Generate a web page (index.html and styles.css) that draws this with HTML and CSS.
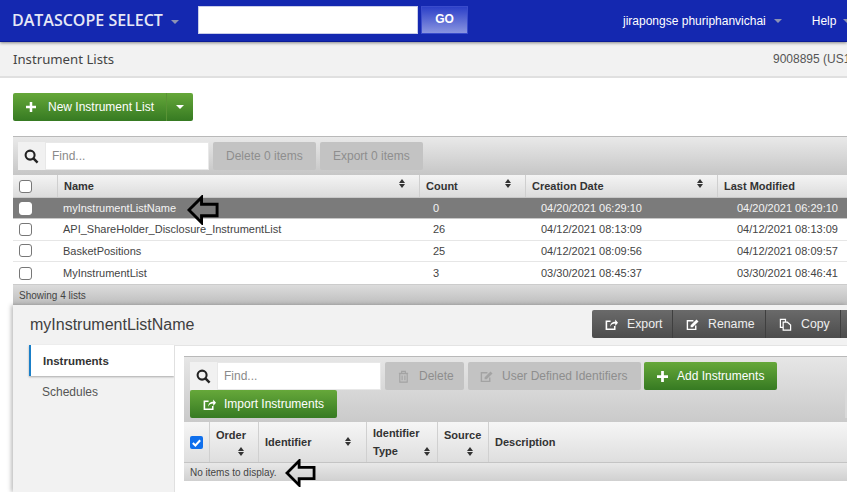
FILE: index.html
```html
<!DOCTYPE html>
<html lang="en">
<head>
<meta charset="utf-8">
<title>Instrument Lists</title>
<link rel="stylesheet" href="styles.css">
</head>
<body>
<div class="page">
  <header class="topbar">
    <div class="brand">DATASCOPE SELECT<span class="caret"></span></div>
    <div class="search"><input class="search-input" type="text" aria-label="Search"><button class="go">GO</button></div>
    <div class="user">jirapongse phuriphanvichai<span class="caret"></span></div>
    <div class="help">Help<span class="caret"></span></div>
  </header>
  <div class="subbar">
    <div class="subtitle">Instrument Lists</div>
    <div class="account">9008895 (US1R</div>
  </div>
  <div class="actions">
    <div class="green-split">
      <div class="green-main">
        <svg class="ico-plus" viewBox="0 0 12 12"><path d="M4.500 0h3v4.500h4.500v3h-4.500v4.500h-3v-4.500h-4.500v-3h4.500z" fill="#fff"/></svg>
        New Instrument List
      </div>
      <div class="green-drop"><span class="caret white"></span></div>
    </div>
  </div>

  <section class="grid-panel">
    <div class="toolbar">
      <div class="find">
        <span class="find-icon"><svg viewBox="0 0 16 16" width="15" height="15"><circle cx="6.500" cy="6.500" r="4.800" fill="none" stroke="#222" stroke-width="2.200"/><path d="M10 10l4.500 4.500" stroke="#222" stroke-width="2.600"/></svg></span>
        <span class="find-box">Find...</span>
      </div>
      <span class="btn-off wide">Delete 0 items</span>
      <span class="btn-off wide">Export 0 items</span>
    </div>
    <div class="row head">
      <div class="cell chk"><span class="box"></span></div>
      <div class="cell hname">Name<span class="sort sort-name"></span></div>
      <div class="cell hcount">Count<span class="sort"></span></div>
      <div class="cell hcreate">Creation Date<span class="sort"></span></div>
      <div class="cell hmod">Last Modified</div>
    </div>
    <div class="row sel">
      <div class="cell chk"><span class="box solid"></span></div>
      <div class="cell name">myInstrumentListName</div>
      <div class="cell count">0</div>
      <div class="cell create">04/20/2021 06:29:10</div>
      <div class="cell mod">04/20/2021 06:29:10</div>
    </div>
    <div class="row">
      <div class="cell chk"><span class="box"></span></div>
      <div class="cell name">API_ShareHolder_Disclosure_InstrumentList</div>
      <div class="cell count">26</div>
      <div class="cell create">04/12/2021 08:13:09</div>
      <div class="cell mod">04/12/2021 08:13:09</div>
    </div>
    <div class="row">
      <div class="cell chk"><span class="box"></span></div>
      <div class="cell name">BasketPositions</div>
      <div class="cell count">25</div>
      <div class="cell create">04/12/2021 08:09:56</div>
      <div class="cell mod">04/12/2021 08:09:57</div>
    </div>
    <div class="row last">
      <div class="cell chk"><span class="box"></span></div>
      <div class="cell name">MyInstrumentList</div>
      <div class="cell count">3</div>
      <div class="cell create">03/30/2021 08:45:37</div>
      <div class="cell mod">03/30/2021 08:46:41</div>
    </div>
    <div class="grid-foot">Showing 4 lists</div>
  </section>

  <section class="detail">
    <div class="detail-head">
      <h2 class="detail-title">myInstrumentListName</h2>
      <div class="dark-group">
        <span class="dark-btn">
          <svg class="ico" viewBox="0 0 14 14"><path d="M10.500 8.500V12.200H1.500V3.500H6" fill="none" stroke="#fff" stroke-width="1.700"/><path d="M5.500 9.500C5.500 6 8 4 11 4V1.500L14 5l-3 3.500V6c-2.500 0-4.500 1-5.500 3.500z" fill="#fff"/></svg>
          Export
        </span>
        <span class="dark-btn">
          <svg class="ico" viewBox="0 0 14 14"><path d="M10.500 8v4.200H1.500V3h6.500" fill="none" stroke="#fff" stroke-width="1.500"/><path d="M5 10V7.800L11.300 1.500 13.500 3.700 7.200 10z" fill="#fff"/></svg>
          Rename
        </span>
        <span class="dark-btn">
          <svg class="ico" viewBox="0 0 14 14"><path d="M1.500 1.500H7V4.500H4.500V10H1.500zM4.500 4.500H9L12.500 7.500V13H4.500z" fill="none" stroke="#fff" stroke-width="1.300"/></svg>
          Copy
        </span>
        <span class="dark-btn stub"></span>
      </div>
    </div>
    <div class="detail-body">
      <nav class="tabs">
        <div class="tab active">Instruments</div>
        <div class="tab">Schedules</div>
      </nav>
      <div class="tab-content">
        <div class="inner-grid">
          <div class="inner-toolbar">
            <div class="find find-inner">
              <span class="find-icon"><svg viewBox="0 0 16 16" width="15" height="15"><circle cx="6.500" cy="6.500" r="4.800" fill="none" stroke="#222" stroke-width="2.200"/><path d="M10 10l4.500 4.500" stroke="#222" stroke-width="2.600"/></svg></span>
              <span class="find-box">Find...</span>
            </div>
            <span class="btn-off with-icon del">
              <svg class="ico" viewBox="0 0 14 14"><path d="M3 4h8v9H3zM2 3.500h10M5 3.500V1.500h4v2M5.500 6v5M8.500 6v5" fill="none" stroke="#a3a3a3" stroke-width="1.200"/></svg>
              Delete
            </span>
            <span class="btn-off with-icon udi">
              <svg class="ico" viewBox="0 0 14 14"><path d="M10.500 8v4.200H1.500V3h6.500" fill="none" stroke="#a3a3a3" stroke-width="1.500"/><path d="M5 10V7.800L11.300 1.500 13.500 3.700 7.200 10z" fill="#a3a3a3"/></svg>
              User Defined Identifiers
            </span>
            <span class="btn-green add">
              <svg class="ico-plus small" viewBox="0 0 12 12"><path d="M4.500 0h3v4.500h4.500v3h-4.500v4.500h-3v-4.500h-4.500v-3h4.500z" fill="#fff"/></svg>
              Add Instruments
            </span>
            <span class="btn-green import">
              <svg class="ico" viewBox="0 0 14 14"><path d="M10.500 8.500V12.200H1.500V3.500H6" fill="none" stroke="#fff" stroke-width="1.700"/><path d="M5.500 9.500C5.500 6 8 4 11 4V1.500L14 5l-3 3.500V6c-2.500 0-4.500 1-5.500 3.500z" fill="#fff"/></svg>
              Import Instruments
            </span>
            <span class="btn-stub"></span>
          </div>
          <div class="inner-head">
            <div class="ih ih-chk"><span class="checked"><svg viewBox="0 0 12 12" width="11" height="11"><path d="M2 6.500l2.800 2.800L10 3.500" fill="none" stroke="#fff" stroke-width="2.200"/></svg></span></div>
            <div class="ih ih-order"><span>Order</span><span class="sort block"></span></div>
            <div class="ih ih-id"><span>Identifier</span><span class="sort"></span></div>
            <div class="ih ih-type"><span>Identifier</span><span class="type-line"><span>Type</span><span class="sort"></span></span></div>
            <div class="ih ih-source"><span>Source</span><span class="sort block"></span></div>
            <div class="ih ih-desc">Description</div>
          </div>
          <div class="inner-foot">No items to display.</div>
        </div>
      </div>
    </div>
  </section>

  <svg class="arrow arrow-top" viewBox="0 0 34 30"><path d="M2 15L15 2v7h16v12H15v7z" fill="none" stroke="#000" stroke-width="3"/></svg>
  <svg class="arrow arrow-bottom" viewBox="0 0 34 30"><path d="M2 15L15 2v7h16v12H15v7z" fill="none" stroke="#000" stroke-width="3"/></svg>
</div>
</body>
</html>
```
FILE: styles.css
```css
* { box-sizing: border-box; }
html, body { margin: 0; padding: 0; background: #fff; }
body { font-family: "Liberation Sans", Arial, sans-serif; font-size: 12px; color: #404040; }
.page { position: relative; width: 847px; height: 492px; overflow: hidden; }

.topbar { height: 42px; background: #1428b0; border-bottom: 1px solid #0c1c96; box-shadow: 0 1px 3px rgba(0,0,0,.45); display: flex; align-items: center; color: #fff; position: relative; z-index: 2; }
.brand { font-family: "Open Sans", sans-serif; font-weight: 600; font-size: 16px; color: #e6e8f6; margin-left: 12px; width: 186px; flex: none; white-space: nowrap; margin-bottom: 1px; }
.caret { display: inline-block; width: 0; height: 0; border: 4px solid transparent; border-top: 4px solid #8d93b4; border-bottom: 0; margin-left: 8px; vertical-align: middle; }
.caret.white { border-top-color: #fff; margin: 0; }
.search { display: flex; gap: 3px; width: 270px; height: 28px; align-self: flex-start; margin-top: 6px; flex: none; }
.search-input { width: 220px; height: 28px; border: 1px solid #c9cde8; background: #fff; padding: 0; }
.go { flex: 1; border: 1px solid #3a4ccc; background: linear-gradient(#2c40c8, #8a95e0); color: #fff; font: bold 12px "Liberation Sans", sans-serif; padding: 0 0 3px; }
.user { margin-left: 155px; font-size: 12px; white-space: nowrap; }
.user .caret { margin-left: 8px; }
.help { margin-left: 30px; font-size: 12px; white-space: nowrap; }
.help .caret { margin-left: 7px; }

.subbar { height: 36px; background: #f2f2f2; border-bottom: 2px solid #e0e0e0; display: flex; justify-content: space-between; align-items: center; padding-left: 13px; white-space: nowrap; }
.subtitle { font-family: "Noto Sans", sans-serif; font-size: 13.200px; color: #444; }
.account { font-size: 12px; color: #555; width: 74px; overflow: hidden; }

.actions { padding: 15px 0 15px 13px; }
.green-split { display: flex; width: 180px; height: 28px; border-radius: 2px; background: linear-gradient(#66a83a, #367a22); color: #fff; font-size: 12px; }
.green-main { width: 154px; display: flex; align-items: center; padding-left: 13px; white-space: nowrap; border-right: 1px solid #5a9335; }
.ico-plus { width: 10px; height: 10px; margin-right: 12px; flex: none; }
.ico-plus.small { width: 11px; height: 11px; margin-right: 9px; }
.green-drop { flex: 1; display: flex; align-items: center; justify-content: center; }

.grid-panel { margin-left: 13px; width: 834px; height: 170px; background: #fff; }
.toolbar { height: 39px; border-top: 1px solid #b9b9b9; background: linear-gradient(#e9e9e9, #c6c6c6); display: flex; align-items: flex-start; padding: 5px 0 0 5px; gap: 4px; }
.find { display: flex; height: 28px; width: 191px; flex: none; }
.find-icon { width: 27px; background: #f1f1f1; display: flex; align-items: center; justify-content: center; }
.find-box { flex: 1; background: #fff; border: 1px solid #e8e8e8; color: #8a8a8a; display: flex; align-items: center; padding-left: 6px; }
.btn-off { height: 28px; display: inline-flex; align-items: center; padding: 0 0 0 13px; background: #c3c3c3; color: #8e8e8e; border-radius: 2px; white-space: nowrap; }
.btn-off.wide { width: 103px; }

.row { display: grid; grid-template-columns: 44px 362px 106px 192px 130px; height: 21.500px; align-items: center; border-bottom: 1px solid #e6e6e6; white-space: nowrap; color: #444; font-size: 11px; }
.row.head { height: 23px; background: linear-gradient(#f4f4f4, #dcdcdc); border-bottom: 1px solid #c8c8c8; font-weight: bold; color: #333; }
.row.sel { height: 21px; background: #7b7b7b; color: #f4f4f4; border-bottom: 1px solid #c8c8c8; }
.row.last { height: 23px; border-bottom: 1px solid #ccc; }
.cell { height: 100%; display: flex; align-items: center; position: relative; }
.chk { padding-left: 6px; }
.box { width: 13px; height: 13px; border: 1px solid #777; border-radius: 3px; background: #fff; display: block; }
.box.solid { border-color: #fff; }
.head .cell + .cell { border-left: 1px solid #cfcfcf; }
.hname, .hcount, .hcreate, .hmod { padding-left: 6px; }
.name { padding-left: 6px; }
.count { padding-left: 14px; }
.create { padding-left: 16px; }
.mod { padding-left: 20px; }
.sort { display: inline-block; position: relative; width: 7px; height: 9px; flex: none; }
.sort::before, .sort::after { content: ""; position: absolute; left: 0; border-left: 3.500px solid transparent; border-right: 3.500px solid transparent; }
.sort::before { top: 0; border-bottom: 4px solid #333; }
.sort::after { bottom: 0; border-top: 4px solid #333; }
.head .sort { position: absolute; right: 13px; top: 4px; }

.detail { position: absolute; left: 13px; top: 305px; width: 834px; height: 187px; background: #f2f2f2; box-shadow: -2px 0 4px rgba(0,0,0,.25); }
.detail-head { display: flex; justify-content: space-between; height: 40px; padding: 5px 0 0 17px; }
.detail-title { margin: 0; font-size: 16px; font-weight: normal; color: #404040; line-height: 30px; }
.dark-group { display: flex; width: 255px; height: 28px; border-radius: 2px 0 0 2px; background: linear-gradient(#6a6a6a, #4c4c4c); color: #eee; flex: none; }
.dark-btn { display: flex; align-items: center; height: 100%; border-right: 1px solid #3f3f3f; white-space: nowrap; font-size: 12.300px; padding-left: 13px; }
.dark-btn:nth-child(1) { width: 81px; }
.dark-btn:nth-child(2) { width: 93px; }
.dark-btn:nth-child(3) { width: 75px; }
.stub { flex: 1; padding: 0; border: 0; }
.ico { width: 13px; height: 13px; margin-right: 9px; flex: none; }

.detail-body { display: flex; height: 147px; }
.tabs { width: 145px; margin-left: 16px; flex: none; font-size: 12px; }
.tab { height: 31px; display: flex; align-items: center; padding-left: 13px; color: #555; }
.tab.active { background: #fff; border-left: 2px solid #1a7fc8; font-weight: bold; color: #333; box-shadow: 0 1px 2px rgba(0,0,0,.3); padding-left: 12px; font-size: 11.500px; }
.tab-content { flex: 1; background: #fff; border-top: 1px solid #e4e4e4; border-left: 1px solid #e0e0e0; padding: 10px 0 0 9px; }
.inner-grid { width: 700px; }
.inner-toolbar { height: 66px; border-top: 1px solid #b9b9b9; background: linear-gradient(#e6e6e6, #cacaca); display: flex; flex-wrap: wrap; align-content: flex-start; padding: 5px 0 0 6px; }
.find-inner { margin-right: 4px; width: 191px; }
.inner-toolbar .btn-off { margin-right: 4px; }
.del { width: 79px; padding-left: 12px; }
.udi { width: 173px; padding-left: 12px; }
.inner-toolbar .udi { margin-right: 3px; }
.with-icon .ico { margin-right: 9px; }
.btn-green { height: 28px; display: inline-flex; align-items: center; border-radius: 2px; background: linear-gradient(#66a83a, #367a22); color: #fff; white-space: nowrap; padding: 0 13px; font-size: 12px; }
.add { width: 133px; margin-right: 100px; }
.import { width: 147px; }
.import .ico { margin-right: 8px; }
.btn-stub { width: 30px; height: 28px; margin-left: 508px; background: #d9d9d9; }

.inner-head { display: flex; height: 41px; background: linear-gradient(#f6f6f6, #dedede); border-bottom: 1px solid #c4c4c4; font-size: 11px; font-weight: bold; color: #333; white-space: nowrap; }
.ih { border-right: 1px solid #d0d0d0; display: flex; flex-direction: column; justify-content: center; position: relative; line-height: 18px; padding-left: 6px; flex: none; }
.ih-chk { width: 26px; }
.checked { width: 13px; height: 13px; background: #0f6fec; border-radius: 2px; display: flex; align-items: center; justify-content: center; }
.ih-order { width: 49px; }
.ih-id { width: 108px; }
.ih-id .sort { position: absolute; right: 14px; top: 15px; }
.ih-type { width: 71px; }
.type-line { display: flex; align-items: center; justify-content: space-between; padding-right: 6px; }
.ih-source { width: 51px; }
.sort.block { display: block; margin: 3px auto 3px; }
.ih-order .sort.block { margin-left: 22px; }
.ih-source .sort.block { margin-left: 23px; }
.ih-desc { border-right: 0; flex: 1; }
.inner-foot { height: 18px; background: linear-gradient(#e8e8e8, #d0d0d0); font-size: 10px; display: flex; align-items: center; padding-left: 6px; color: #444; }

.grid-foot { height: 20px; background: linear-gradient(#dcdcdc, #bdbdbd); font-size: 10px; display: flex; align-items: center; padding-left: 6px; color: #444; }

.arrow { position: absolute; width: 33px; height: 30px; z-index: 3; }
.arrow-top { left: 187px; top: 195px; }
.arrow-bottom { left: 284px; top: 459px; width: 34px; height: 28px; }
```
